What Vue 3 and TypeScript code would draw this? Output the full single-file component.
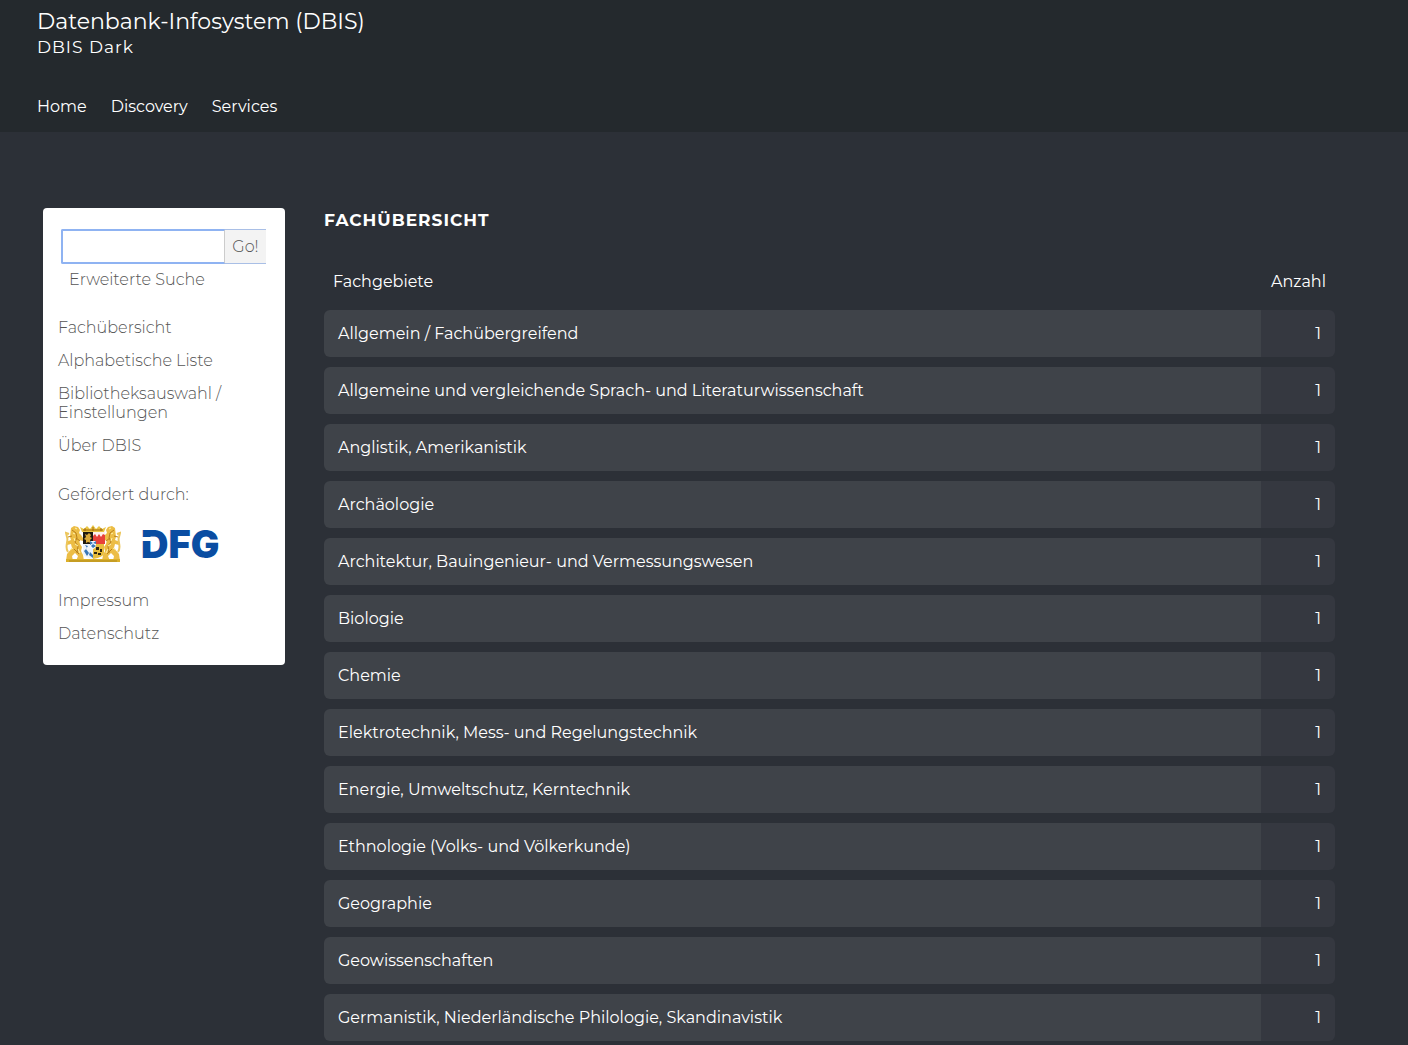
<script setup lang="ts">
import { ref } from 'vue'

interface Subject {
  name: string
  count: number
}

const mainLinks: string[] = ['Home', 'Discovery', 'Services']
const browseLinks: string[] = ['Fachübersicht', 'Alphabetische Liste', 'Bibliotheksauswahl / Einstellungen', 'Über DBIS']
const legalLinks: string[] = ['Impressum', 'Datenschutz']

const subjects: Subject[] = [
  'Allgemein / Fachübergreifend',
  'Allgemeine und vergleichende Sprach- und Literaturwissenschaft',
  'Anglistik, Amerikanistik',
  'Archäologie',
  'Architektur, Bauingenieur- und Vermessungswesen',
  'Biologie',
  'Chemie',
  'Elektrotechnik, Mess- und Regelungstechnik',
  'Energie, Umweltschutz, Kerntechnik',
  'Ethnologie (Volks- und Völkerkunde)',
  'Geographie',
  'Geowissenschaften',
  'Germanistik, Niederländische Philologie, Skandinavistik',
].map((name) => ({ name, count: 1 }))

const query = ref('')
</script>

<template>
  <div class="page">
    <header class="header">
      <h1 class="title">Datenbank-Infosystem (DBIS)</h1>
      <p class="subtitle">DBIS Dark</p>
      <nav class="nav">
        <a v-for="link in mainLinks" :key="link" href="#">{{ link }}</a>
      </nav>
    </header>

    <div class="content">
      <aside class="sidebar">
        <form class="search" @submit.prevent>
          <input v-model="query" type="text" aria-label="Suche" />
          <button type="submit">Go!</button>
        </form>
        <a class="advanced" href="#">Erweiterte Suche</a>
        <nav class="links">
          <a v-for="link in browseLinks" :key="link" href="#">{{ link }}</a>
        </nav>
        <p class="funded">Gefördert durch:</p>
        <div class="sponsors">
          <a href="#" aria-label="Freistaat Bayern">
            <svg width="56" height="38" viewBox="0 0 56 38">
              <g id="lion">
                <path d="M6 3l3-2 4 1 2 3-1 3 2 2 2 3v3l-4-1 1 4 2 3-1 4 2 4 1 6h-8l2-5-3-3-3 3 1 5H1l1-7 5-6-1-4-4 1-1-3 5-2-1-3z" fill="#ecbd45" />
                <path d="M7 5l4 3 1 5-2 4 3 4-1 7M3 12l4-1M11 13l4 3M9 24l5 5" fill="none" stroke="#b8801c" />
                <path d="M3 27C-1 21 4 17 2 12L1 8l3 1" fill="none" stroke="#ecc65c" stroke-width="2" />
                <path d="M10 3l2 1M8 8l2 1M9 13l1 3M10 19l3 2M5 25l3-2M13 24l2 4" stroke="#fff3b0" />
              </g>
              <use href="#lion" transform="translate(56 0) scale(-1 1)" />
              <path d="M17 7l-2-5 4 2 3-3 3 3 3-4 3 4 3-3 3 3 4-2-2 5z" fill="#e9c544" />
              <path d="M18 5h20M20 3v3M28 2v4M36 3v3" stroke="#a66b0a" />
              <path d="M18 7h20v21q0 5-10 7-10-2-10-7z" fill="#fff" />
              <path d="M18 7h10v12H18z" fill="#1e1a10" />
              <path d="M20 9l2 1 2-2 2 2-1 2 2 1-2 2 1 3-3-1-2 1v-3l-2-1 2-2z" fill="#d9a93a" />
              <path d="M28 7h12v12H28z" fill="#e8423a" />
              <path d="M28 7h12v3l-2-1-2 3-2-3-2 3-2-3-2 2z" fill="#fff1ed" />
              <path d="M18 19h10v15q-10-2-10-6z" fill="#eef4fb" />
              <path d="M20 20l2 3-3 3 3 5 2-3-3-4 2-3zM25 27l3 3v3l-4-3z" fill="#3a77b6" />
              <path d="M28 19h11v9q0 4-11 6z" fill="#e8bd3e" />
              <path d="M31 22h3v3h-3zM35 24h2v3h-2zM29 27h3v2h-3zM33 28h3v2h-3z" fill="#30250e" />
              <path d="M25 16h6v4q0 3-3 4-3-1-3-4z" fill="#f8fbff" />
              <path d="M25 16l3 2-3 2zM28 18l3-2v3zM26 21l2-2v4zM28 19l3 2-3 2z" fill="#3a78bb" />
              <path d="M1 34h54v3H1z" fill="#dcb02a" />
              <path d="M4 36h48" stroke="#b08a1c" />
            </svg>
          </a>
          <a class="dfg" href="#">DFG</a>
        </div>
        <nav class="links legal">
          <a v-for="link in legalLinks" :key="link" href="#">{{ link }}</a>
        </nav>
      </aside>

      <main class="main">
        <h2>Fachübersicht</h2>
        <table>
          <thead>
            <tr>
              <th scope="col">Fachgebiete</th>
              <th scope="col" class="count">Anzahl</th>
            </tr>
          </thead>
          <tbody>
            <tr v-for="subject in subjects" :key="subject.name">
              <td><a href="#">{{ subject.name }}</a></td>
              <td class="count">{{ subject.count }}</td>
            </tr>
          </tbody>
        </table>
      </main>
    </div>
  </div>
</template>

<style>
body {
  margin: 0;
  background: #2c3037;
}
</style>

<style scoped>
.page {
  color: #fff;
  font-family: Montserrat, Inter, sans-serif;
  font-size: 16px;
  line-height: 19px;
}

a {
  color: inherit;
  text-decoration: none;
}

h1,
h2,
p {
  margin: 0;
}

.header {
  padding: 8px 37px 16px;
  background: #24292d;
}

.title {
  font-size: 22px;
  font-weight: 400;
  line-height: 28px;
}

.subtitle {
  font-size: 17px;
  line-height: 22px;
  letter-spacing: 1px;
}

.nav {
  display: flex;
  gap: 24px;
  padding-top: 39px;
}

.content {
  display: flex;
  align-items: flex-start;
  gap: 39px;
  padding: 76px 73px 0 43px;
}

.sidebar {
  box-sizing: border-box;
  flex: none;
  width: 242px;
  padding: 21px 19px 22px 15px;
  border-radius: 4px;
  background: #fff;
  color: #555;
  font-weight: 300;
}

.search {
  display: flex;
  height: 35px;
  margin-left: 3px;
}

.search input {
  box-sizing: border-box;
  flex: 1;
  width: 0;
  min-width: 0;
  padding: 0 8px;
  border: 2px solid #8fb3f2;
  border-right: 1px solid #ccc;
  border-radius: 2px 0 0 2px;
  outline: none;
  font: inherit;
}

.search button {
  width: 41px;
  padding: 0;
  border: solid #a9bfe6;
  border-width: 1px 0;
  background: #f3f3f3;
  color: #555;
  font: inherit;
}

.advanced {
  display: block;
  margin: 6px 0 0 11px;
}

.links {
  display: flex;
  flex-direction: column;
  gap: 14px;
  padding-top: 29px;
}

.funded {
  padding-top: 30px;
}

.sponsors {
  display: flex;
  align-items: center;
  gap: 20px;
  height: 40px;
  padding: 20px 0 0 7px;
}

.sponsors svg {
  display: block;
}

.dfg {
  position: relative;
  color: #0a4da2;
  font-family: Inter, sans-serif;
  font-size: 38px;
  font-weight: 900;
  line-height: 40px;
}

/* Opening in the stem of the logo's first letter */
.dfg::before {
  content: '';
  position: absolute;
  top: 13px;
  left: 0;
  width: 12px;
  height: 4px;
  background: #fff;
}

.legal {
  padding-top: 27px;
}

.main {
  flex: 1;
  min-width: 0;
}

h2 {
  font-size: 17px;
  font-weight: 700;
  line-height: 24px;
  letter-spacing: 1px;
  text-transform: uppercase;
}

table {
  width: 100%;
  margin-top: 21px;
  border-collapse: separate;
  border-spacing: 0 10px;
}

th {
  padding: 9px;
  font-weight: 400;
  line-height: 19px;
  text-align: left;
}

td {
  padding: 14px;
  background: #3f4349;
}

td:first-child {
  border-radius: 6px 0 0 6px;
}

.count {
  width: 46px;
  text-align: right;
}

td.count {
  border-radius: 0 6px 6px 0;
  background: #353840;
}
</style>
